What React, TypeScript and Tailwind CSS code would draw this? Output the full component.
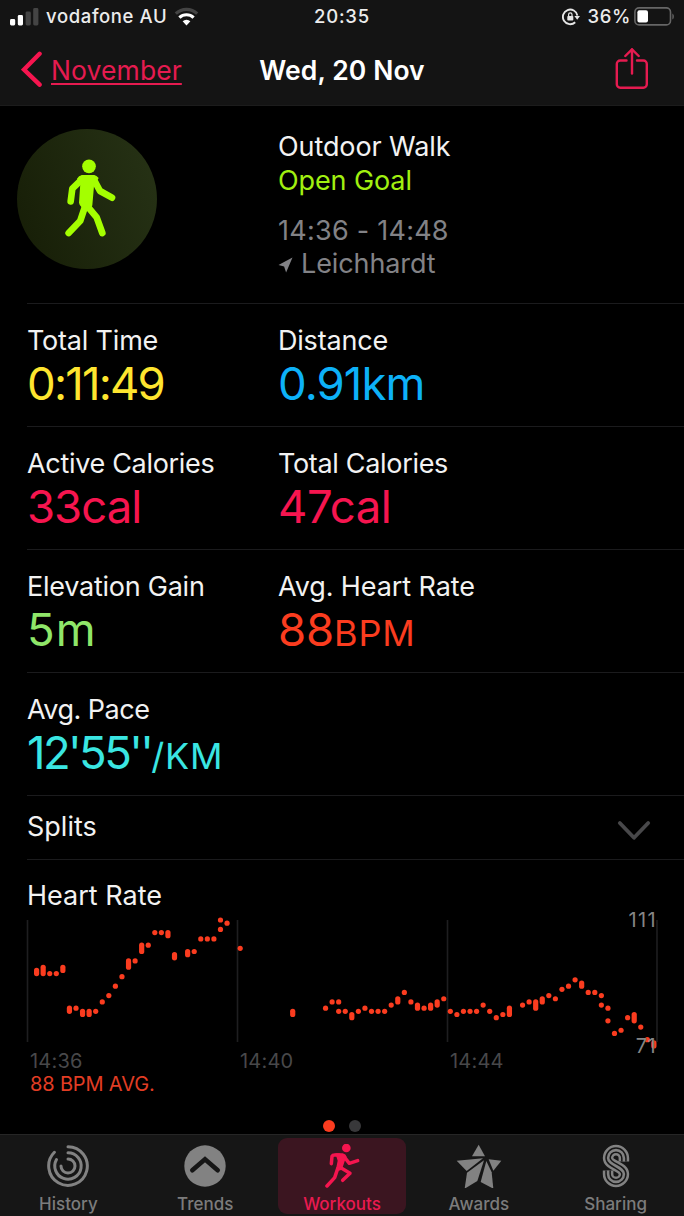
import type { ReactNode } from "react";
import clsx from "clsx";

type Metric = {
  label: string;
  value: string;
  unit?: string;
  color: string;
  tracking?: string;
  labelTracking?: string;
};

const METRICS: Metric[][] = [
  [
    { label: "Total Time", value: "0:11:49", color: "text-[#fee52f]", tracking: "tracking-[-1.8px]", labelTracking: "tracking-[-0.2px]" },
    { label: "Distance", value: "0.91km", color: "text-[#0db1f8]", tracking: "tracking-[-0.9px]", labelTracking: "tracking-[-0.2px]" },
  ],
  [
    { label: "Active Calories", value: "33cal", color: "text-[#f6154f]", tracking: "tracking-[-1px]", labelTracking: "tracking-[-0.32px]" },
    { label: "Total Calories", value: "47cal", color: "text-[#f6154f]", tracking: "tracking-[-0.5px]", labelTracking: "tracking-[-0.32px]" },
  ],
  [
    { label: "Elevation Gain", value: "5m", color: "text-[#8fe669]", tracking: "tracking-[1px]", labelTracking: "tracking-[-0.25px]" },
    { label: "Avg. Heart Rate", value: "88", unit: "BPM", color: "text-[#fb3c1f]", tracking: "tracking-[-0.1px]", labelTracking: "tracking-[-0.1px]" },
  ],
  [
    { label: "Avg. Pace", value: "12'55''", unit: "/KM", color: "text-[#3ae6e2]", tracking: "tracking-[-2.6px]", labelTracking: "tracking-[-0.5px]" },
  ],
];

// [slot, bpm] or [slot, low, high]
const SAMPLES: number[][] = [
  [0, 94, 95], [1, 94, 96], [2, 94], [3, 94], [4, 95, 96], [5, 82, 83], [6, 83], [7, 81, 82],
  [8, 81, 82], [9, 82], [10, 85], [11, 87], [12, 90], [13, 93], [14, 96, 98], [15, 98],
  [16, 101, 103], [17, 103], [18, 107], [19, 107], [20, 106, 107], [21, 99, 100], [23, 100, 101],
  [24, 101], [25, 105], [26, 105], [27, 105], [28, 108], [28, 111], [29, 110], [31, 102],
  [39, 81, 82], [44, 83], [45, 85], [46, 82], [46, 85], [47, 82], [48, 80, 81], [49, 82],
  [50, 83], [51, 82], [52, 82], [53, 82], [54, 84], [55, 85, 86], [56, 88], [57, 85],
  [58, 83, 84], [59, 83], [60, 83, 84], [61, 84, 85], [62, 86], [63, 82], [64, 81], [65, 82],
  [66, 82], [67, 82], [68, 84], [69, 82], [70, 80], [71, 81], [72, 81, 83], [74, 84], [75, 85],
  [76, 83, 85], [77, 85, 86], [78, 87], [79, 86], [80, 89], [81, 90], [82, 92], [83, 90, 91],
  [84, 88], [85, 88], [86, 84], [86, 87], [87, 79], [87, 83], [88, 75], [89, 76], [90, 80],
  [91, 79, 81], [92, 77], [93, 73], [94, 71, 72],
];

const MAX_BPM = 111;
const BPM_HEIGHT = 3.15;
const SLOT_WIDTH = 6.567;

function StatusBar() {
  return (
    <div className="grid h-[33px] grid-cols-3 items-center text-[18.5px] font-medium text-[#ececec]">
      <div className="flex items-center pl-[10px]">
        <svg width="29" height="18" viewBox="0 0 29 18">
          <rect x="0" y="11" width="5.2" height="6.5" rx="1.4" fill="#fff" />
          <rect x="7.8" y="7" width="5.2" height="10.5" rx="1.4" fill="#fff" />
          <rect x="15.6" y="3.5" width="5.2" height="14" rx="1.4" fill="#444" />
          <rect x="23.2" y="0" width="5.2" height="17.5" rx="1.4" fill="#444" />
        </svg>
        <span className="ml-[7px] whitespace-nowrap tracking-[0.62px]">vodafone AU</span>
        <svg className="ml-[7px]" width="25" height="19" viewBox="0 0 25 19" fill="none">
          <path d="M1.8 6.6a15.4 15.4 0 0 1 21.4 0" stroke="#444" strokeWidth="3.2" />
          <path d="M5.4 10.6a10.3 10.3 0 0 1 14.2 0" stroke="#fff" strokeWidth="3.2" />
          <path d="M12.5 18.4 8.6 14.3a5.6 5.6 0 0 1 7.8 0z" fill="#fff" />
        </svg>
      </div>
      <div className="text-center tracking-[0.8px]">20:35</div>
      <div className="flex items-center justify-end pr-[9px]">
        <svg width="18" height="18" viewBox="0 0 18 18" fill="none">
          <path d="M13.2 14.2A7.3 7.3 0 1 1 15.4 7.6" stroke="#e6e6e6" strokeWidth="1.9" />
          <path d="M12.4 8h5.6l-2.8 3.8z" fill="#e6e6e6" />
          <rect x="5.3" y="8" width="6" height="4.6" rx="0.8" fill="#e6e6e6" />
          <path d="M6.6 8.2V6.6a1.7 1.7 0 0 1 3.4 0v1.6" stroke="#e6e6e6" strokeWidth="1.2" />
        </svg>
        <span className="ml-[8px] tracking-[0.6px]">36%</span>
        <svg className="ml-[3px]" width="41" height="19" viewBox="0 0 41 19" fill="none">
          <rect x="0.9" y="0.9" width="35.6" height="17" rx="4.2" stroke="#666" strokeWidth="1.6" />
          <rect x="3.4" y="3.2" width="10.6" height="12.4" rx="2" fill="#fff" />
          <path d="M38.4 6.4c1.9.9 1.9 5.2 0 6.1z" fill="#666" />
        </svg>
      </div>
    </div>
  );
}

function NavBar() {
  return (
    <div className="grid h-[72px] grid-cols-3 items-center text-[26.5px]">
      <div className="flex items-center pl-[21px] text-[#e51b50]">
        <svg width="21" height="36" viewBox="0 0 21 36" fill="none">
          <path d="M18.6 2.8 3 18.5l15.6 15.2" stroke="#f6154f" strokeWidth="4.4" strokeLinecap="round" />
        </svg>
        <span className="mt-[3px] ml-[9px] tracking-[0.1px] underline decoration-[1.6px] underline-offset-[3px]">
          November
        </span>
      </div>
      <h1 className="mt-[3px] text-center font-semibold tracking-[0.1px] whitespace-nowrap text-white">
        Wed, 20 Nov
      </h1>
      <div className="flex justify-end pr-[35px]">
        <svg width="34" height="42" viewBox="0 0 34 42" fill="none" stroke="#e51b50" strokeWidth="2.4" strokeLinecap="round" strokeLinejoin="round">
          <path d="M11.5 12.5H5.2a3.4 3.4 0 0 0-3.4 3.4v20.4a3.4 3.4 0 0 0 3.4 3.4h23.2a3.4 3.4 0 0 0 3.4-3.4V15.9a3.4 3.4 0 0 0-3.4-3.4H22" />
          <path d="M17 25.5v-24" />
          <path d="M10.3 8 17 1.3 23.7 8" />
        </svg>
      </div>
    </div>
  );
}

function WalkBadge() {
  return (
    <div className="flex size-[140px] items-center justify-center rounded-full bg-linear-[70deg] from-[#161d06] to-[#273316]">
      <svg width="140" height="140" viewBox="51 57 420 420" fill="none" stroke="#a4ff00" strokeWidth="20" strokeLinecap="round" strokeLinejoin="round">
        <circle cx="267" cy="169" r="20.5" fill="#a4ff00" stroke="none" />
        <path d="M246 195h36q8 1 14 9l-14 24-5 58q-2 10-14 10-24-2-26-18l4-58-10-14q5-9 15-11z" fill="#a4ff00" stroke="none" />
        <path d="M212 274l5-38 31-30" />
        <path d="M280 206l20 37 36 20" />
        <path d="M257 284l-16 48-35 37" />
        <path d="M260 286l30 36 17 47" />
      </svg>
    </div>
  );
}

function Summary() {
  return (
    <section className="flex h-[197px] pl-[17px]">
      <div className="w-[261px] pt-[23px]">
        <WalkBadge />
      </div>
      <div className="pt-[24px] text-[27px] leading-[33.5px] tracking-[-0.1px]">
        <div className="text-[#f2f2f2]">Outdoor Walk</div>
        <div className="text-[#a1f010]">Open Goal</div>
        <div className="mt-[16.5px] tracking-[0.25px] text-[#828286]">14:36 - 14:48</div>
        <div className="flex items-center text-[#828286]">
          <svg className="mt-[3px] mr-[8px]" width="15" height="16" viewBox="0 0 15 16">
            <path d="M14.5.5.5 8l5.6 1.4 2 6.1z" fill="#828286" />
          </svg>
          Leichhardt
        </div>
      </div>
    </section>
  );
}

function MetricCell({ metric }: { metric: Metric }) {
  return (
    <div className="pt-[20px]">
      <div className={clsx("text-[27px] leading-[33px] text-[#f2f2f2]", metric.labelTracking)}>
        {metric.label}
      </div>
      <div className={clsx("text-[45.5px] leading-[53px] whitespace-nowrap", metric.color, metric.tracking)}>
        {metric.value}
        {metric.unit && <span className="text-[36px] tracking-[0.8px]">{metric.unit}</span>}
      </div>
    </div>
  );
}

function HeartRateChart() {
  return (
    <svg className="block overflow-visible" width="657" height="136" viewBox="0 -8 657 136" fill="none">
      {[0.5, 210.5, 420.5, 630].map((x) => (
        <path key={x} d={`M${x} 0V122`} stroke="#1e1e20" strokeWidth="1.6" />
      ))}
      {SAMPLES.map(([slot, low, high = low]) => {
        const x = 9.6 + slot * SLOT_WIDTH;
        const top = (MAX_BPM - high) * BPM_HEIGHT;
        const bottom = (MAX_BPM - low) * BPM_HEIGHT;
        return (
          <path
            key={`${slot}-${low}`}
            d={`M${x} ${top}V${bottom + 0.01}`}
            stroke="#fb3c1f"
            strokeWidth="5.2"
            strokeLinecap="round"
          />
        );
      })}
    </svg>
  );
}

function HeartRate() {
  return (
    <section className="h-[274px] pt-[19px] pl-[27px]">
      <h2 className="text-[27px] leading-[33px] text-[#f2f2f2]">Heart Rate</h2>
      <div className="relative text-[20px] leading-[24px] text-[#858585]">
        <HeartRateChart />
        <span className="absolute top-[-4px] right-[27px] tracking-[1.4px]">111</span>
        <span className="absolute top-[122px] right-[28px] tracking-[0.4px]">71</span>
      </div>
      <div className="grid grid-cols-[210px_210px_210px] pt-px pl-[3px] text-[20px] leading-[24px] tracking-[0.2px] text-[#48484a]">
        <span>14:36</span>
        <span>14:40</span>
        <span>14:44</span>
      </div>
      <div className="pl-[3px] text-[20px] leading-[23px] tracking-[-0.15px] text-[#e23d24]">88 BPM AVG.</div>
      <div className="mt-[24px] mr-[27px] flex justify-center gap-[14px]">
        <span className="size-[12px] rounded-full bg-[#fb3c1f]" />
        <span className="size-[12px] rounded-full bg-[#38383a]" />
      </div>
    </section>
  );
}

function HistoryIcon() {
  return (
    <svg width="44" height="44" viewBox="-22 -22 44 44" fill="none" stroke="#828282" strokeWidth="3" strokeLinecap="round">
      <path d="M0-19.3A19.3 19.3 0 1 1-13.6-13.7" />
      <path d="M0-13.2A13.2 13.2 0 1 1-11.5-6.5" />
      <path d="M0-7A7 7 0 1 1-7 0" />
    </svg>
  );
}

function TrendsIcon() {
  return (
    <svg width="44" height="44" viewBox="-22 -22 44 44" fill="none">
      <circle r="20.7" fill="#828282" />
      <path d="M-12.7 4.3 0-6.8 12.7 4.3" stroke="#161616" strokeWidth="4.6" strokeLinecap="round" />
    </svg>
  );
}

function WorkoutsIcon() {
  return (
    <svg width="44" height="44" viewBox="178 102 132 132" fill="none" stroke="#f6154f" strokeWidth="10.5" strokeLinecap="round" strokeLinejoin="round">
      <circle cx="257" cy="114" r="13" fill="#f6154f" stroke="none" />
      <path d="M224 130h22q10 2 12 10l-6 14-8 24q-10 8-18 0l5-26z" fill="#f6154f" stroke="none" />
      <path d="M212 161l2-22q2-4 8-4h14" />
      <path d="M250 140l16 20 25-8" />
      <path d="M238 172l30 18-22 21" />
      <path d="M231 176l-9 27-23 25" />
    </svg>
  );
}

function AwardsIcon() {
  return (
    <svg width="46" height="44" viewBox="75 103 138 132" fill="#828282">
      <path d="M143 105 162 140h-39z" />
      <path d="M77 153 156 146 107 184z" />
      <path d="M173 149 211 153 187 183z" />
      <path d="M159 152 139 214 101 237 108 189z" />
      <path d="M166 154 182 188 187 237 149 217z" />
    </svg>
  );
}

// nested strokes on a single S curve leave three parallel strands
function SharingIcon() {
  const curve = "M7.9-4.5V-8A7.9 7.9 0 1 0-7.9-8C-7.9-.5 7.9.5 7.9 8A7.9 7.9 0 1 1-7.9 8V4.5";
  return (
    <svg width="44" height="44" viewBox="-22 -22 44 44" fill="none">
      <path d={curve} stroke="#828282" strokeWidth="10.6" />
      <path d={curve} stroke="#161616" strokeWidth="5.6" />
      <path d={curve} stroke="#828282" strokeWidth="2.6" />
    </svg>
  );
}

const TABS: { label: string; icon: ReactNode; active?: boolean }[] = [
  { label: "History", icon: <HistoryIcon /> },
  { label: "Trends", icon: <TrendsIcon /> },
  { label: "Workouts", icon: <WorkoutsIcon />, active: true },
  { label: "Awards", icon: <AwardsIcon /> },
  { label: "Sharing", icon: <SharingIcon /> },
];

function TabBar() {
  return (
    <nav className="grid h-[82px] grid-cols-5 border-t border-[#262626] bg-[#161616] pt-[3px] pb-[4px]">
      {TABS.map((tab) => (
        <div
          key={tab.label}
          className={clsx(
            "mx-[4px] flex flex-col items-center rounded-[9px] pt-[6px] text-[17px] leading-[20px] font-medium",
            tab.active ? "bg-[#3b1520] text-[#ea1a50]" : "text-[#7c7c7c]"
          )}
        >
          {tab.icon}
          <span className="mt-[5.5px]">{tab.label}</span>
        </div>
      ))}
    </nav>
  );
}

export default function App() {
  return (
    <div className="flex h-[1216px] w-[684px] flex-col overflow-hidden bg-black font-['Inter',sans-serif]">
      <header className="h-[106px] border-b border-[#1c1c1c] bg-[#141414]">
        <StatusBar />
        <NavBar />
      </header>
      <main className="flex-1">
        <Summary />
        {METRICS.map((row) => (
          <div key={row[0].label} className="ml-[27px] grid h-[123px] grid-cols-[251px_1fr] border-t border-[#1b1b1d]">
            {row.map((metric) => (
              <MetricCell key={metric.label} metric={metric} />
            ))}
          </div>
        ))}
        <div className="ml-[27px] flex h-[65px] items-center justify-between border-y border-[#1b1b1d] pr-[33px] text-[27px] text-[#f2f2f2]">
          <span className="-mt-px">Splits</span>
          <svg className="mt-[6px]" width="34" height="22" viewBox="0 0 34 22" fill="none">
            <path d="M2.8 3 17 17.8 31.2 3" stroke="#48484a" strokeWidth="3.8" strokeLinecap="round" strokeLinejoin="round" />
          </svg>
        </div>
        <HeartRate />
      </main>
      <TabBar />
    </div>
  );
}
